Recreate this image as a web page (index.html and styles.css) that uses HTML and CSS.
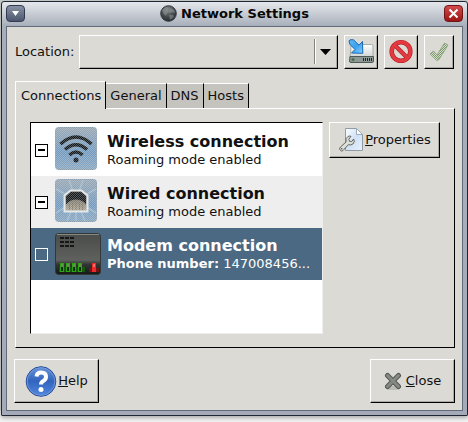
FILE: index.html
```
<!DOCTYPE html>
<html lang="en">
<head>
<meta charset="utf-8">
<title>Network Settings</title>
<link rel="stylesheet" href="styles.css">
</head>
<body>
<main class="window">
  <header class="titlebar">
    <button class="wm-button wm-menu" aria-label="Window menu"><svg width="19" height="17" viewBox="0 0 19 17"><path d="M6 6h7l-3.500 5z" fill="#fff"/></svg></button>
    <h1 class="title">
      <svg width="17" height="17" viewBox="0 0 17 17"><defs><radialGradient id="globe" cx=".45" cy=".25" r=".8"><stop offset="0" stop-color="#858a8b"/><stop offset=".55" stop-color="#454b4e"/><stop offset="1" stop-color="#202529"/></radialGradient></defs><circle cx="8.500" cy="8.500" r="7.800" fill="url(#globe)" stroke="#353b3f"/><path d="M2 5l4-3 2 1-1 2 2 2-2 1-1 3-3-3zM10 3l4 2 1 3-3-1-2 1-1-2zM9 10l4 0 1 2-4 3z" fill="#929899" opacity=".55"/></svg>
      <span>Network Settings</span>
    </h1>
    <button class="wm-button wm-close" aria-label="Close window"><svg width="19" height="17" viewBox="0 0 19 17"><path d="M5.500 4.500l8 8m0-8l-8 8" stroke="#fff" stroke-width="2"/></svg></button>
  </header>

  <div class="content">
    <div class="location">
      <label for="location">Location:</label>
      <div class="combo">
        <select id="location"><option></option></select>
        <svg class="combo-arrow" width="24" height="26" viewBox="0 0 24 26"><path d="M1.500 0v25" stroke="#84847f"/><path d="M2.500 0v25" stroke="#fff"/><path d="M7 10h11l-5.500 6z" fill="#000"/></svg>
      </div>
      <button class="raised tool" aria-label="Save location">
        <svg width="26" height="26" viewBox="0 0 26 26"><defs><linearGradient id="disk" x2="0" y2="1"><stop offset="0" stop-color="#fff"/><stop offset="1" stop-color="#cbd2d0"/></linearGradient><linearGradient id="blue" x2="1" y2="1"><stop offset="0" stop-color="#62bdf5"/><stop offset=".5" stop-color="#3aa0ed"/><stop offset="1" stop-color="#85d0ff"/></linearGradient></defs><path d="M3 7q0-1.500 1.500-1.500h19Q25 5.500 25 7v12H2z" fill="url(#disk)" stroke="#a4acaa"/><path d="M2 17.500h23.500V22q0 1.500-1.500 1.500H3Q1.500 23.500 1.500 22z" fill="#8d9793" stroke="#4d5955"/><path d="M15.500 19v3m2-3v3m2-3v3m2-3v3m2-3v3" stroke="#1f2825"/><circle cx="5" cy="20.500" r="1.500" fill="#4c6b50"/><path d="M2 .8L5.500 .8 11 6.200 14.500 2.500 14.800 14.300 3.500 14 7 10.500 2 5.500 1 2z" fill="url(#blue)" stroke="#1767b4" stroke-linejoin="round"/></svg>
      </button>
      <button class="raised tool" aria-label="Delete location">
        <svg width="26" height="26" viewBox="0 0 26 26"><circle cx="13" cy="12.500" r="9.300" fill="none" stroke="#b92028" stroke-width="4.600"/><path d="M6.800 6.300l12.400 12.400" stroke="#b92028" stroke-width="4.400"/><circle cx="13" cy="12.500" r="9.300" fill="none" stroke="#e23a40" stroke-width="3.200"/><path d="M6.500 6l13 13" stroke="#e23a40" stroke-width="3"/></svg>
      </button>
      <button class="raised tool tool-apply" aria-label="Apply location" disabled>
        <svg width="22" height="24" viewBox="0 0 22 24"><defs><pattern id="checkdots" width="2" height="2" patternUnits="userSpaceOnUse"><rect width="2" height="2" fill="#d3dcc8"/><rect width="1" height="1" fill="#7c9a68"/><rect x="1" y="1" width="1" height="1" fill="#7c9a68"/></pattern></defs><path d="M2 14L5.500 11 9 15 16.500 3 20 5 11 19.500 8.500 20.500z" fill="url(#checkdots)" stroke="#93a888" stroke-linejoin="round"/></svg>
      </button>
    </div>

    <div class="tabs" role="tablist">
      <button class="tab tab-active" role="tab" aria-selected="true">Connections</button>
      <button class="tab" role="tab">General</button>
      <button class="tab" role="tab">DNS</button>
      <button class="tab" role="tab">Hosts</button>
    </div>

    <section class="panel" role="tabpanel" aria-label="Connections">
      <ul class="list">
        <li class="row">
          <input class="check check-mixed" type="checkbox" id="wireless">
          <svg class="device" width="42" height="43" viewBox="0 0 42 43"><defs><linearGradient id="tile" x2="0" y2="1"><stop offset="0" stop-color="#9aa8b4"/><stop offset=".6" stop-color="#7199bf"/><stop offset="1" stop-color="#8ba8c0"/></linearGradient><pattern id="stipple" width="2" height="2" patternUnits="userSpaceOnUse"><rect width="1" height="1" fill="#e1e6e9"/><rect x="1" y="1" width="1" height="1" fill="#e1e6e9"/></pattern></defs><rect x=".5" y=".5" width="41" height="42" rx="3" fill="url(#tile)" stroke="#8a9faf"/><g fill="none" stroke="#14191c" stroke-width="3.500"><path d="M5.500 17Q21 3 36.500 17"/><path d="M10 22.500q11-9.500 22 0"/><path d="M14.500 28q6.500-6 13 0"/></g><circle cx="21" cy="33" r="2.500" fill="#14191c"/><rect width="42" height="43" rx="3" fill="url(#stipple)" opacity=".3"/></svg>
          <label class="info" for="wireless"><strong class="name">Wireless connection</strong><span class="detail">Roaming mode enabled</span></label>
        </li>
        <li class="row row-alt">
          <input class="check check-mixed" type="checkbox" id="wired">
          <svg class="device" width="42" height="43" viewBox="0 0 42 43"><defs><linearGradient id="port" x2="0" y2="1"><stop offset="0" stop-color="#4f4d48"/><stop offset="1" stop-color="#b5ac98"/></linearGradient></defs><rect x=".5" y=".5" width="41" height="42" rx="3" fill="url(#tile)" stroke="#8a9faf"/><path d="M21 21L14 1M21 21L28 1M21 21L1 10M21 21L41 10M21 21L1 34M21 21L41 34M21 21L12 42M21 21V42M21 21L30 42" stroke="#b4c9dc" stroke-width="1.500" opacity=".6"/><path d="M9.500 32.500V16.500l6-5h11l6 5v16z" fill="url(#port)" stroke="#e3e8ea" stroke-width="2"/><path d="M11 25.500V17.500l5-4.500h10l5 4.500v8q-4-5-10-5t-10 5z" fill="#171b1e"/><path d="M14.500 24v7m3-8v8m3.500-8v8m3.500-8v8m3-7v7" stroke="#837c6e"/><rect width="42" height="43" rx="3" fill="url(#stipple)" opacity=".3"/></svg>
          <label class="info" for="wired"><strong class="name">Wired connection</strong><span class="detail">Roaming mode enabled</span></label>
        </li>
        <li class="row row-selected">
          <input class="check" type="checkbox" id="modem">
          <svg class="device" width="46" height="42" viewBox="0 0 46 42"><defs><linearGradient id="modemface" x2="0" y2="1"><stop offset="0" stop-color="#4a4c4a"/><stop offset=".65" stop-color="#5f615f"/><stop offset=".75" stop-color="#343634"/><stop offset="1" stop-color="#151715"/></linearGradient></defs><rect x=".5" y=".5" width="45" height="41" rx="3" fill="url(#modemface)" stroke="#333836"/><path d="M2 1.500h42" stroke="#858885"/><path fill="#151816" d="M5 4h4v2H5zM10 4h4v2h-4zM15 4h4v2h-4zM5 8h4v2H5zM10 8h4v2h-4zM15 8h4v2h-4zM5 12h4v2H5zM10 12h4v2h-4zM15 12h4v2h-4z"/><rect x="4" y="34" width="26" height="5" fill="#145a0c"/><g stroke="#2da411" stroke-width="1" fill="#102d0a"><rect x="5.500" y="30.500" width="3" height="8"/><rect x="11.500" y="30.500" width="3" height="8"/><rect x="17.500" y="30.500" width="3" height="8"/><rect x="23.500" y="30.500" width="3" height="8"/></g><path d="M7 31v3m6-3v3m6-3v3m6-3v3" stroke="#b2ff8a"/><rect x="34" y="35" width="10" height="4" fill="#731315"/><rect x="37" y="30" width="4" height="9" fill="#ed2929"/><path d="M39 31v3" stroke="#ffb0a5"/></svg>
          <label class="info" for="modem"><strong class="name">Modem connection</strong><span class="detail"><b>Phone number:</b> 147008456...</span></label>
        </li>
      </ul>
      <button class="raised properties">
        <svg width="26" height="26" viewBox="0 0 26 26"><defs><linearGradient id="page" x2="1" y2="1"><stop offset="0" stop-color="#fff"/><stop offset=".5" stop-color="#cfe1f5"/><stop offset="1" stop-color="#e9f1fa"/></linearGradient></defs><path d="M7.500 1.500h11l6 6v16h-17z" fill="url(#page)" stroke="#8f9ca8"/><path d="M18.500 1.500v6h6z" fill="#fff" stroke="#9cabb8"/><path d="M2.500 23.500q-2-1.500 0-3.500L8 15q-1-4 2-5.500 1.500-.8 3-.2l-2.200 3 .7 2 2.200.2 2-2.500q1.500 3-.8 5-2 1.500-4.500.7L5 23.500q-1.300 1.300-2.500 0z" fill="#deded9" stroke="#62655f"/><circle cx="3.700" cy="21.800" r=".8" fill="#555"/></svg>
        <span><u>P</u>roperties</span>
      </button>
    </section>

    <footer class="actions">
      <button class="raised action action-help">
        <svg width="32" height="33" viewBox="0 0 32 33"><defs><linearGradient id="helpball" x2="0" y2="1"><stop offset="0" stop-color="#6a96d8"/><stop offset=".48" stop-color="#3264bd"/><stop offset="1" stop-color="#5288df"/></linearGradient></defs><circle cx="16" cy="16.500" r="14.800" fill="url(#helpball)" stroke="#234a98"/><circle cx="16" cy="16.500" r="13.800" fill="none" stroke="#6f97d8"/><path d="M11.500 11.500Q12 7.500 16 7.500q5 0 5 4.300 0 2.700-2.700 4.200-2.300 1.300-2.300 3.500" fill="none" stroke="#fff" stroke-width="4"/><circle cx="16" cy="24.500" r="2.500" fill="#fff"/></svg>
        <span><u>H</u>elp</span>
      </button>
      <button class="raised action action-close">
        <svg width="18" height="18" viewBox="0 0 18 18"><ellipse cx="9" cy="16" rx="7" ry="2" fill="#bbbcb6"/><path d="M3.500 3.500l11 11m0-11l-11 11" stroke="#535752" stroke-width="5" stroke-linecap="round"/><path d="M3.500 3.500l11 11m0-11l-11 11" stroke="#858a84" stroke-width="3" stroke-linecap="round"/></svg>
        <span><u>C</u>lose</span>
      </button>
    </footer>
  </div>
</main>
</body>
</html>
```
FILE: styles.css
```
* { box-sizing: border-box; }

body {
  margin: 0;
  padding: 1px 0 6px 1px;
  background: linear-gradient(#c4ccc7 0 410px, #f3f3f3 411px);
  color: #111;
  font: 13px/16px "DejaVu Sans", sans-serif;
}

button, select, input { font: inherit; color: inherit; margin: 0; }
button { padding: 0; }
svg { display: block; flex: none; }

.window {
  padding: 0 4px 4px;
  border: 1px solid #202633;
  border-radius: 3px 3px 1px 1px;
  background: linear-gradient(#e5e8ec, #a9afba 24px, #a5aab9);
  box-shadow: 0 2px 4px #aaa;
}

.titlebar { display: flex; align-items: center; height: 24px; padding-bottom: 1px; }
.title {
  flex: 1;
  display: flex;
  justify-content: center;
  align-items: center;
  gap: 4px;
  margin: 0;
  font-size: 13px;
  color: #080808;
}
.wm-button { border: 1px solid #303a50; border-radius: 4px; height: 17px; width: 19px; overflow: hidden; }
.wm-button svg { margin: -1px; }
.wm-menu { background: linear-gradient(#8992a5, #4c566d); }
.wm-close { border-color: #721516; background: linear-gradient(#d34c4c, #9c1515); }

.content {
  padding: 8px 7px 7px;
  border: 1px solid #626b79;
  background: #dbdad5;
}

.raised, .combo {
  border: 1px solid;
  border-color: #fff #000 #000 #fff;
  background: #dbdad5;
  box-shadow: inset -1px -1px #aaa9a4;
}
.raised { display: flex; align-items: center; justify-content: center; }

.location { display: flex; align-items: stretch; gap: 6px; height: 34px; padding-right: 1px; }
.location label { align-self: center; width: 59px; padding-left: 1px; }
.combo { position: relative; flex: 1; }
.combo select { appearance: none; width: 100%; height: 100%; border: 0; background: transparent; padding: 0 28px 0 6px; }
.combo-arrow { position: absolute; right: 0; top: 3px; pointer-events: none; }
.tool { width: 34px; }
.tool-apply { width: 30px; }

.tabs { display: flex; align-items: flex-end; margin-top: 12px; padding: 0 1px; }
.tab {
  height: 25px;
  padding: 0 4px;
  border: solid;
  border-width: 1px 1px 0 0;
  border-color: #fff #000 #000;
  background: #c4c3bd;
}
.tab-active {
  height: 28px;
  margin-bottom: -1px;
  padding: 0 4px 0 5px;
  border-left: 1px solid #fff;
  background: #dbdad5;
  z-index: 1;
}

.panel {
  display: flex;
  align-items: flex-start;
  gap: 6px;
  margin: 0 0 11px 1px;
  padding: 13px 14px;
  border: 1px solid;
  border-color: #fff #000 #000 #fff;
}
.list {
  flex: 1;
  min-width: 0;
  min-height: 212px;
  margin: 0;
  padding: 1px 0 0;
  list-style: none;
  background: #fff;
  border: 1px solid;
  border-color: #000 #eee #eee #000;
}
.row { display: flex; align-items: center; height: 52px; padding-left: 4px; }
.row-alt { background: #eee; }
.row-selected { background: #4b6983; color: #fff; }
.check { appearance: none; flex: none; width: 13px; height: 13px; border: 1px solid #000; background: #fff; }
.check-mixed { background: linear-gradient(#000, #000) center / 7px 2px no-repeat #fff; }
.row-selected .check { border-color: #fff; background: #4b6983; }
.device { margin: 0 10px 4px 7px; }
.row-selected .device { margin: 0 6px 0 7px; }
.info { flex: 1; min-width: 0; white-space: nowrap; }
.name, .detail { display: block; }
.name { font-size: 16px; line-height: 20px; }

.properties { width: 111px; height: 36px; gap: 1px; }

.actions { display: flex; justify-content: space-between; }
.action { width: 85px; height: 44px; }
.action-help { gap: 1px; }
.action-close { gap: 4px; }
```
